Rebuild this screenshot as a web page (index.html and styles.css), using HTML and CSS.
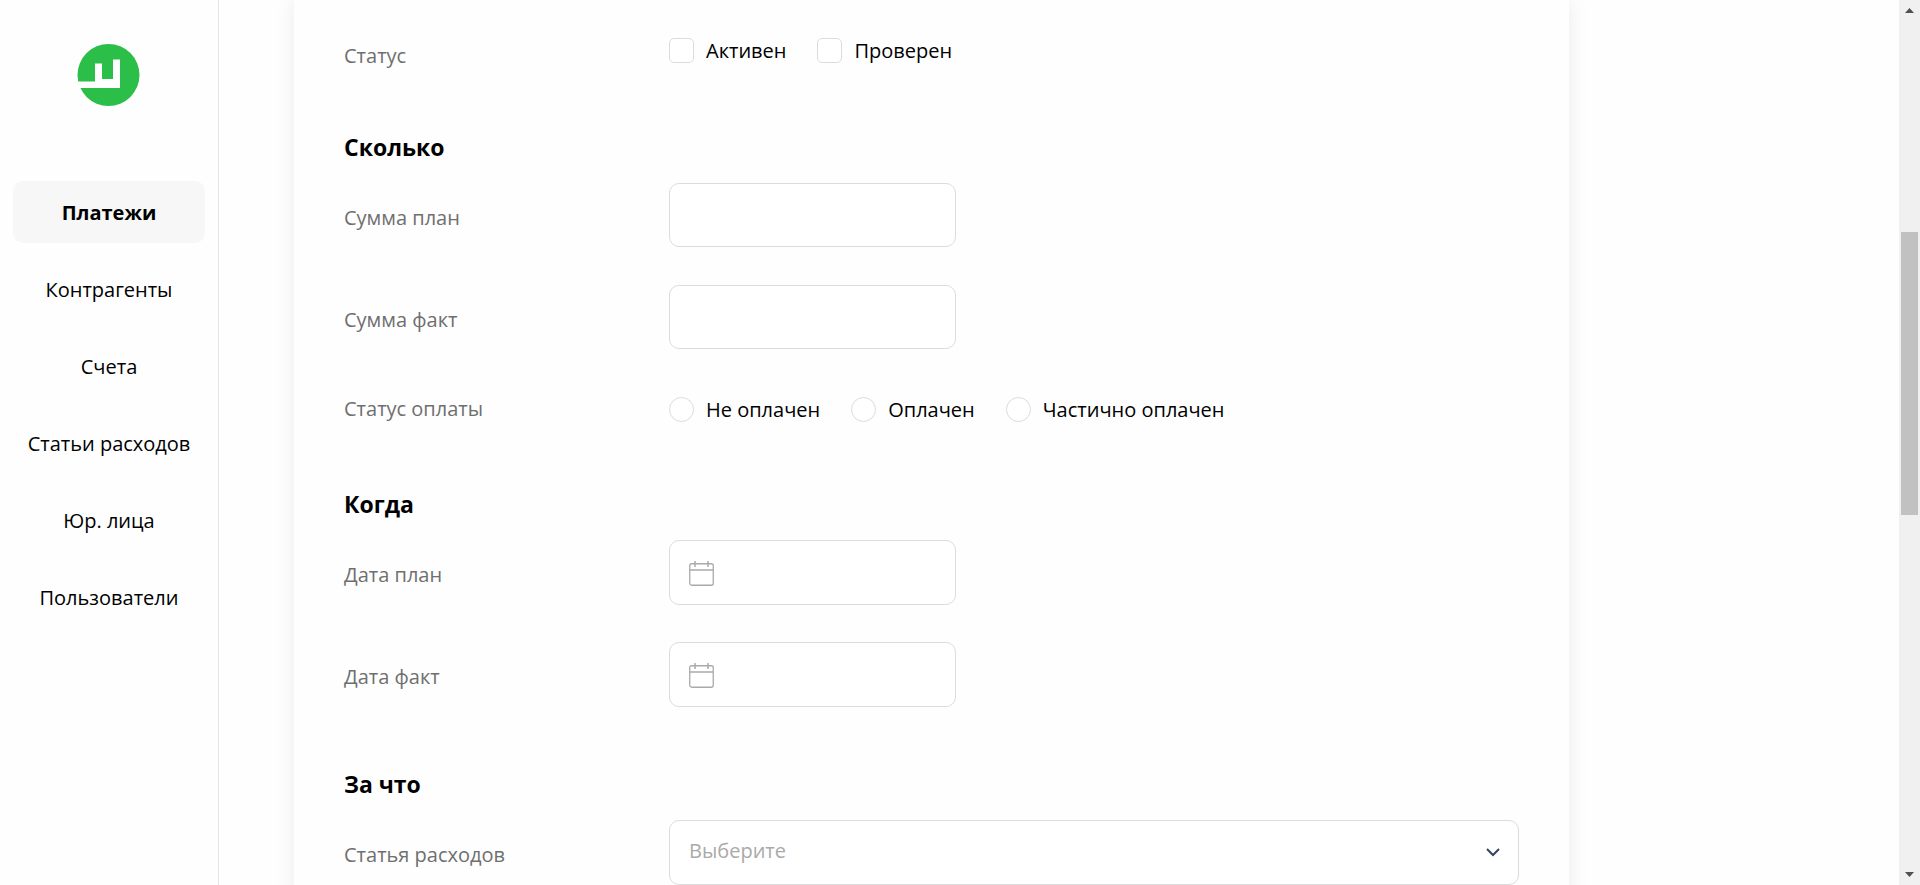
FILE: index.html
```html
<!DOCTYPE html>
<html lang="ru">
<head>
<meta charset="utf-8">
<title>Платежи</title>
<link rel="stylesheet" href="styles.css">
</head>
<body>
<div class="app">
  <aside class="sidebar">
    <a class="logo" href="#" aria-label="Главная">
      <svg width="64" height="62" viewBox="0 0 64 62">
        <ellipse cx="31.500" cy="31" rx="31" ry="31" fill="#2bbf4a"/>
        <path d="M0 37.500H18V19.500H25V35H36V15.500H43V44H0Z" fill="#fff"/>
      </svg>
    </a>
    <nav class="nav">
      <a class="nav-link nav-link-active" href="#">Платежи</a>
      <a class="nav-link" href="#">Контрагенты</a>
      <a class="nav-link" href="#">Счета</a>
      <a class="nav-link" href="#">Статьи расходов</a>
      <a class="nav-link" href="#">Юр. лица</a>
      <a class="nav-link" href="#">Пользователи</a>
    </nav>
  </aside>

  <main class="main">
    <form class="card">
      <section class="section">
        <div class="row row-status">
          <span class="label" id="status-label">Статус</span>
          <div class="choices" role="group" aria-labelledby="status-label">
            <label class="choice"><input class="check" type="checkbox">Активен</label>
            <label class="choice"><input class="check" type="checkbox">Проверен</label>
          </div>
        </div>
      </section>

      <section class="section">
        <h2 class="title">Сколько</h2>
        <div class="row">
          <label class="label" for="sum-plan">Сумма план</label>
          <input class="input" id="sum-plan" type="text">
        </div>
        <div class="row">
          <label class="label" for="sum-fact">Сумма факт</label>
          <input class="input" id="sum-fact" type="text">
        </div>
        <div class="row row-payment">
          <span class="label" id="payment-label">Статус оплаты</span>
          <div class="choices" role="radiogroup" aria-labelledby="payment-label">
            <label class="choice"><input class="radio" type="radio" name="payment">Не оплачен</label>
            <label class="choice"><input class="radio" type="radio" name="payment">Оплачен</label>
            <label class="choice"><input class="radio" type="radio" name="payment">Частично оплачен</label>
          </div>
        </div>
      </section>

      <section class="section">
        <h2 class="title">Когда</h2>
        <div class="row">
          <label class="label" for="date-plan">Дата план</label>
          <div class="date">
            <svg class="calendar" width="25" height="25" viewBox="0 0 25 25" fill="none" stroke="#aaa">
              <rect x=".75" y="2.750" width="23.500" height="21.500" rx="2" stroke-width="1.300"/>
              <path d="M1 9H24" stroke-width="1.500"/>
              <path d="M6 0V6M19 0V6" stroke-width="1.500"/>
            </svg>
            <input class="date-input" id="date-plan" type="text">
          </div>
        </div>
        <div class="row">
          <label class="label" for="date-fact">Дата факт</label>
          <div class="date">
            <svg class="calendar" width="25" height="25" viewBox="0 0 25 25" fill="none" stroke="#aaa">
              <rect x=".75" y="2.750" width="23.500" height="21.500" rx="2" stroke-width="1.300"/>
              <path d="M1 9H24" stroke-width="1.500"/>
              <path d="M6 0V6M19 0V6" stroke-width="1.500"/>
            </svg>
            <input class="date-input" id="date-fact" type="text">
          </div>
        </div>
      </section>

      <section class="section">
        <h2 class="title">За что</h2>
        <div class="row">
          <label class="label" for="expense">Статья расходов</label>
          <div class="select-wrap">
            <select class="select" id="expense">
              <option>Выберите</option>
            </select>
            <svg class="chevron" width="14" height="9" viewBox="0 0 14 9" fill="none" stroke="#344563" stroke-width="2">
              <path d="M1 1L7 7L13 1"/>
            </svg>
          </div>
        </div>
      </section>
    </form>
  </main>

  <div class="scrollbar" aria-hidden="true">
    <svg class="arrow" width="9" height="5" viewBox="0 0 9 5"><path d="M0 5L4.500 0L9 5Z" fill="#505050"/></svg>
    <div class="thumb"></div>
    <svg class="arrow arrow-down" width="9" height="5" viewBox="0 0 9 5"><path d="M0 0L4.500 5L9 0Z" fill="#505050"/></svg>
  </div>
</div>
</body>
</html>
```
FILE: styles.css
```css
* {
  box-sizing: border-box;
}

body {
  margin: 0;
  background: #fefefe;
  color: #000;
  font: 20px/27px "Open Sans", "Noto Sans", sans-serif;
}

.app {
  display: flex;
  height: 100vh;
  overflow: hidden;
}

/* Sidebar */
.sidebar {
  flex: none;
  width: 219px;
  padding: 44px 13px 0;
  border-right: 1px solid #e6e6e6;
}

.logo {
  display: flex;
  justify-content: center;
  margin-bottom: 75px;
}

.nav {
  display: flex;
  flex-direction: column;
  gap: 15px;
}

.nav-link {
  display: flex;
  align-items: center;
  justify-content: center;
  height: 62px;
  border-radius: 10px;
  color: inherit;
  text-decoration: none;
  white-space: nowrap;
}

.nav-link-active {
  background: #f7f7f7;
  font-weight: 700;
}

/* Form */
.main {
  flex: 1;
  min-width: 0;
  padding-left: 75px;
  overflow: hidden;
}

.card {
  max-width: 1275px;
  padding: 28px 50px;
  box-shadow: 0 0 20px rgba(0, 0, 0, .08);
}

.section {
  margin-bottom: 24px;
}

.title {
  margin: 0 0 19px;
  font-size: 23px;
  line-height: 33px;
  font-weight: 700;
}

.row {
  display: grid;
  grid-template-columns: 325px 1fr;
  align-items: start;
  min-height: 102px;
}

.row-status {
  min-height: 79px;
}

.row-payment {
  min-height: 77px;
}

.label {
  padding-top: 21px;
  color: #6f6f6f;
}

.row-status .label {
  padding-top: 14px;
}

.row-payment .label {
  padding-top: 8px;
}

.choices {
  display: flex;
  flex-wrap: wrap;
  gap: 31px;
  padding-top: 9px;
}

.choice {
  display: flex;
  align-items: center;
  gap: 12px;
}

.check,
.radio {
  appearance: none;
  width: 25px;
  height: 25px;
  margin: 0;
  border: 1px solid #dcdcdc;
  border-radius: 5px;
  background: #fff;
}

.radio {
  border-radius: 50%;
}

.input,
.date,
.select {
  border: 1px solid #dcdcdc;
  border-radius: 10px;
  background: #fff;
  font: inherit;
}

.input {
  width: 287px;
  height: 64px;
  padding: 0 19px;
}

.date {
  display: flex;
  align-items: center;
  gap: 12px;
  width: 287px;
  height: 65px;
  padding: 2px 19px 0;
}

.calendar {
  flex: none;
}

.date-input {
  flex: 1;
  min-width: 0;
  padding: 0;
  border: 0;
  background: none;
  font: inherit;
}

.select-wrap {
  position: relative;
}

.select {
  display: block;
  appearance: none;
  width: 100%;
  height: 65px;
  padding: 0 50px 4px 19px;
  color: #aaa;
}

.chevron {
  position: absolute;
  top: 28px;
  right: 19px;
  pointer-events: none;
}

/* Scroll track */
.scrollbar {
  flex: none;
  display: grid;
  grid-template-rows: 21px 211fr 283fr 349fr 21px;
  justify-items: center;
  width: 21px;
  background: #f0f0f0;
}

.arrow {
  grid-row: 1;
  align-self: center;
}

.arrow-down {
  grid-row: 5;
}

.thumb {
  grid-row: 3;
  width: 17px;
  background: #c1c1c1;
}
```
